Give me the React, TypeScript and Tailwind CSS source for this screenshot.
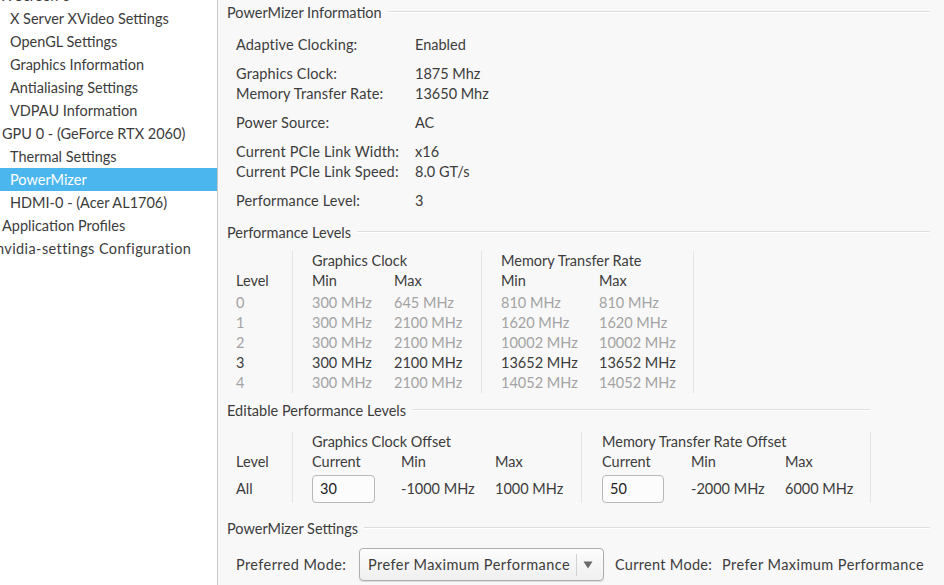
import React from "react";

const FONT = { fontFamily: "Lato, 'Open Sans', 'Noto Sans', sans-serif" };

function SideItem({ label, indent, selected }: { label: string; indent: number; selected?: boolean }) {
  return (
    <div
      className={`h-[23px] leading-[23px] whitespace-nowrap ${selected ? "bg-[#4bb6ee] text-white" : "text-[#3c3c3c]"}`}
      style={{ paddingLeft: indent }}
    >
      {label}
    </div>
  );
}

function FrameTitle({ title, end }: { title: string; end: string }) {
  return (
    <div className={`flex items-center h-[20px] pl-[9px] ${end}`}>
      <span className="text-[#3c3c3c] whitespace-nowrap">{title}</span>
      <div className="flex-1 ml-[6px] border-t border-[#dedede] border-b border-b-white h-0 mt-[-2px]" />
    </div>
  );
}

function InfoRow({ k, v }: { k: string; v: string }) {
  return (
    <div className="flex h-[20px] leading-[20px]">
      <div className="w-[179px] text-[#3c3c3c] tracking-[0.15px]">{k}</div>
      <div className="text-[#3c3c3c]">{v}</div>
    </div>
  );
}

const Sep = () => <div className="w-px bg-[#e4e4e4] self-stretch" />;

const levels = [
  ["0", "300 MHz", "645 MHz", "810 MHz", "810 MHz"],
  ["1", "300 MHz", "2100 MHz", "1620 MHz", "1620 MHz"],
  ["2", "300 MHz", "2100 MHz", "10002 MHz", "10002 MHz"],
  ["3", "300 MHz", "2100 MHz", "13652 MHz", "13652 MHz"],
  ["4", "300 MHz", "2100 MHz", "14052 MHz", "14052 MHz"],
];

export default function App() {
  return (
    <div className="w-[944px] h-[585px] overflow-hidden flex text-[14.5px]" style={FONT}>
      <div className="w-[218px] shrink-0 bg-white border-r border-[#c9c9c9] overflow-hidden">
        <div className="mt-[-16px]">
          <SideItem label="X Screen 0" indent={2} />
          <SideItem label="X Server XVideo Settings" indent={10} />
          <SideItem label="OpenGL Settings" indent={10} />
          <SideItem label="Graphics Information" indent={10} />
          <SideItem label="Antialiasing Settings" indent={10} />
          <SideItem label="VDPAU Information" indent={10} />
          <SideItem label="GPU 0 - (GeForce RTX 2060)" indent={2} />
          <SideItem label="Thermal Settings" indent={10} />
          <SideItem label="PowerMizer" indent={10} selected />
          <SideItem label="HDMI-0 - (Acer AL1706)" indent={10} />
          <SideItem label="Application Profiles" indent={2} />
          <div className="h-[23px] leading-[23px] whitespace-nowrap text-[#3c3c3c] ml-[-4px] tracking-[0.4px]">nvidia-settings Configuration</div>
        </div>
      </div>

      <div className="flex-1 bg-[#f8f8f8] overflow-hidden">
        <div className="pt-[3px]">
          <FrameTitle title="PowerMizer Information" end="mr-[14px]" />
          <div className="pl-[18px] mt-[12px]">
            <InfoRow k="Adaptive Clocking:" v="Enabled" />
            <div className="mt-[9px]">
              <InfoRow k="Graphics Clock:" v="1875 Mhz" />
              <InfoRow k="Memory Transfer Rate:" v="13650 Mhz" />
            </div>
            <div className="mt-[9px]">
              <InfoRow k="Power Source:" v="AC" />
            </div>
            <div className="mt-[9px]">
              <InfoRow k="Current PCIe Link Width:" v="x16" />
              <InfoRow k="Current PCIe Link Speed:" v="8.0 GT/s" />
            </div>
            <div className="mt-[9px]">
              <InfoRow k="Performance Level:" v="3" />
            </div>
          </div>

          <div className="mt-[12px]">
            <FrameTitle title="Performance Levels" end="mr-[14px]" />
          </div>
          <div className="pl-[18px] mt-[8px] flex leading-[20px]">
            <div className="w-[56px]">
              <div className="h-[20px]" />
              <div className="h-[20px] text-[#3c3c3c]">Level</div>
              <div className="h-[2px]" />
              {levels.map((r) => (
                <div key={r[0]} className={`h-[20px] ${r[0] === "3" ? "text-[#3c3c3c]" : "text-[#a3a3a3]"}`}>{r[0]}</div>
              ))}
            </div>
            <Sep />
            <div className="pl-[19px] w-[188px]">
              <div className="h-[20px] text-[#3c3c3c]">Graphics Clock</div>
              <div className="flex h-[20px] text-[#3c3c3c]">
                <div className="w-[82px]">Min</div>
                <div>Max</div>
              </div>
              <div className="h-[2px]" />
              {levels.map((r) => (
                <div key={r[0]} className={`flex h-[20px] ${r[0] === "3" ? "text-[#3c3c3c]" : "text-[#a3a3a3]"}`}>
                  <div className="w-[82px]">{r[1]}</div>
                  <div>{r[2]}</div>
                </div>
              ))}
            </div>
            <Sep />
            <div className="pl-[19px] w-[211px]">
              <div className="h-[20px] text-[#3c3c3c]">Memory Transfer Rate</div>
              <div className="flex h-[20px] text-[#3c3c3c]">
                <div className="w-[98px]">Min</div>
                <div>Max</div>
              </div>
              <div className="h-[2px]" />
              {levels.map((r) => (
                <div key={r[0]} className={`flex h-[20px] ${r[0] === "3" ? "text-[#3c3c3c]" : "text-[#a3a3a3]"}`}>
                  <div className="w-[98px]">{r[3]}</div>
                  <div>{r[4]}</div>
                </div>
              ))}
            </div>
            <Sep />
          </div>

          <div className="mt-[8px]">
            <FrameTitle title="Editable Performance Levels" end="mr-[74px]" />
          </div>
          <div className="pl-[18px] mt-[11px] flex leading-[20px] text-[#3c3c3c]">
            <div className="w-[56px]">
              <div className="h-[20px]" />
              <div className="h-[20px]">Level</div>
              <div className="h-[28px] mt-[3px] leading-[28px]">All</div>
            </div>
            <Sep />
            <div className="pl-[19px] w-[288px]">
              <div className="h-[20px] whitespace-nowrap">Graphics Clock Offset</div>
              <div className="flex h-[20px]">
                <div className="w-[89px]">Current</div>
                <div className="w-[94px]">Min</div>
                <div>Max</div>
              </div>
              <div className="flex h-[28px] mt-[3px] items-center">
                <div className="w-[89px]">
                  <div className="w-[63px] h-[28px] bg-[#fcfcfc] border border-[#b9b9b9] rounded-[4px] pl-[7px] leading-[26px] text-[#222]">30</div>
                </div>
                <div className="w-[94px]">-1000 MHz</div>
                <div>1000 MHz</div>
              </div>
            </div>
            <Sep />
            <div className="pl-[20px] w-[288px]">
              <div className="h-[20px] whitespace-nowrap">Memory Transfer Rate Offset</div>
              <div className="flex h-[20px]">
                <div className="w-[89px]">Current</div>
                <div className="w-[94px]">Min</div>
                <div>Max</div>
              </div>
              <div className="flex h-[28px] mt-[3px] items-center">
                <div className="w-[89px]">
                  <div className="w-[62px] h-[28px] bg-[#fcfcfc] border border-[#b9b9b9] rounded-[4px] pl-[7px] leading-[26px] text-[#222]">50</div>
                </div>
                <div className="w-[94px]">-2000 MHz</div>
                <div>6000 MHz</div>
              </div>
            </div>
            <Sep />
          </div>

          <div className="mt-[16px]">
            <FrameTitle title="PowerMizer Settings" end="mr-[14px]" />
          </div>
          <div className="pl-[18px] mt-[9px] flex items-center text-[#3c3c3c] whitespace-nowrap">
            <div className="w-[123px] tracking-[0.4px]">Preferred Mode:</div>
            <div className="w-[245px] h-[33px] rounded-[4px] border border-[#aeaeae] bg-gradient-to-b from-[#fdfdfd] to-[#efefef] shadow-[0_1px_1px_rgba(0,0,0,0.12)] flex items-center">
              <div className="pl-[8px] w-[216px] tracking-[0.45px]">Prefer Maximum Performance</div>
              <div className="w-px h-[22px] bg-[#d2d2d2]" />
              <div className="flex-1 pl-[6px] flex items-center">
                <svg width="10" height="8" viewBox="0 0 10 8">
                  <polygon points="0.5,0.5 9.5,0.5 5,7.5" fill="#6a6a6a" />
                </svg>
              </div>
            </div>
            <div className="ml-[11px] w-[107px] tracking-[0.3px]">Current Mode:</div>
            <div className="tracking-[0.45px]">Prefer Maximum Performance</div>
          </div>
        </div>
      </div>
    </div>
  );
}
